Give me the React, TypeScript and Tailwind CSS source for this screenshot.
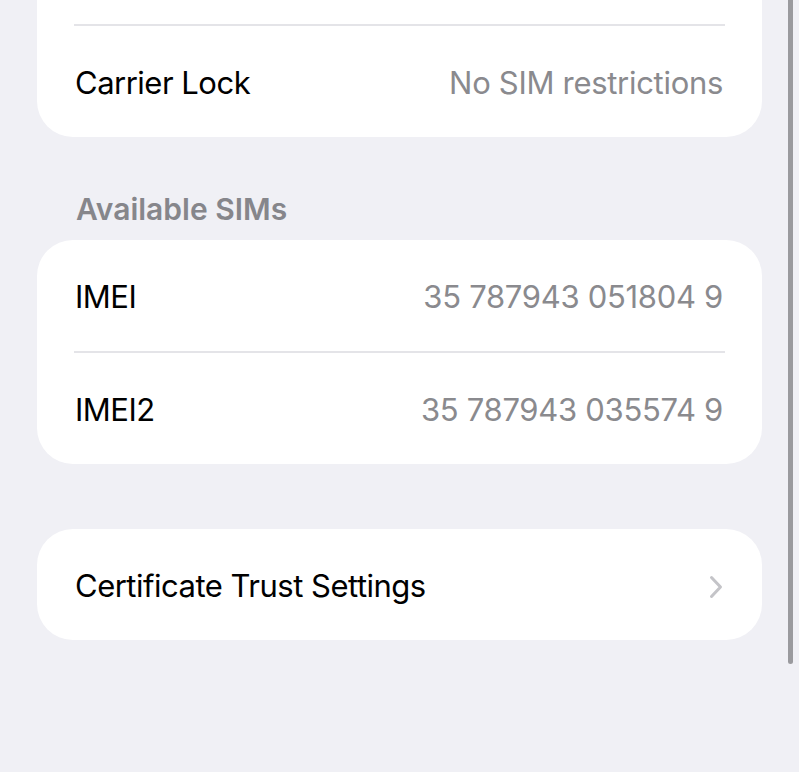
import React from "react";

const font = { fontFamily: "Inter, 'Noto Sans', sans-serif" };

function Chevron() {
  return (
    <svg width="14" height="24" viewBox="0 0 14 24" fill="none">
      <path d="M2.5 2.5 L11.5 12 L2.5 21.5" stroke="#c4c4c8" strokeWidth="3" strokeLinecap="round" strokeLinejoin="round" />
    </svg>
  );
}

function Row({ label, value, chevron }: { label: string; value?: string; chevron?: boolean }) {
  return (
    <div className="flex items-center justify-between h-[111px] pt-[4px] pl-[38px] pr-[39px]">
      <span className="text-[31px] text-black tracking-[-0.5px]">{label}</span>
      {value && <span className="text-[31px] text-[#8a8a8e] tracking-[-0.3px]">{value}</span>}
      {chevron && <Chevron />}
    </div>
  );
}

function Divider() {
  return <div className="ml-[37px] mr-[37px] h-[2px] bg-[#e4e4e8]" />;
}

export default function App() {
  return (
    <div className="relative w-[799px] h-[772px] overflow-hidden bg-[#f0f0f5]" style={font}>
      <div className="flex flex-col px-[37px]">
        <div className="bg-white rounded-b-[36px]">
          <div className="h-[24px]" />
          <Divider />
          <Row label="Carrier Lock" value="No SIM restrictions" />
        </div>
        <div className="h-[103px] flex items-end pl-[39px] pb-[8px]">
          <span className="text-[30px] font-semibold text-[#86868b]">Available SIMs</span>
        </div>
        <div className="bg-white rounded-[36px]">
          <Row label="IMEI" value="35 787943 051804 9" />
          <Divider />
          <Row label="IMEI2" value="35 787943 035574 9" />
        </div>
        <div className="h-[65px]" />
        <div className="bg-white rounded-[36px]">
          <Row label="Certificate Trust Settings" chevron />
        </div>
      </div>
      <div className="absolute left-[788px] top-0 w-[5px] h-[664px] rounded-b-full bg-[#9a9a9e]" />
    </div>
  );
}
